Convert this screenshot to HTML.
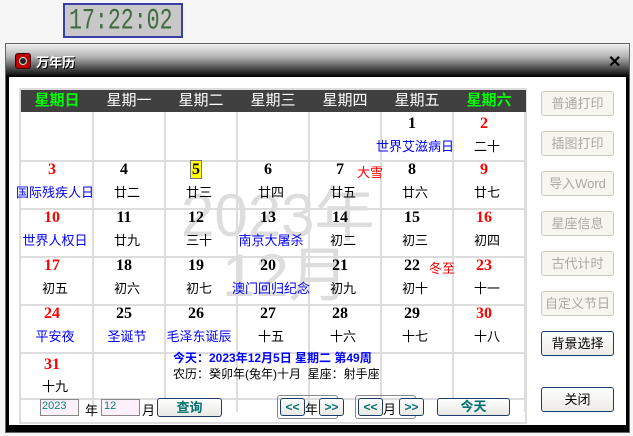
<!DOCTYPE html>
<html><head><meta charset="utf-8"><style>
*{margin:0;padding:0;box-sizing:border-box}
body{width:633px;height:436px;background:#f6f6f6;position:relative;overflow:hidden;font-family:"Liberation Sans","Noto Sans CJK SC",sans-serif;font-size:12px}
.a{position:absolute}
#clock{left:63px;top:3px;width:120px;height:35px;border:2px solid #3a3fa8;background:#c8c8c8;overflow:hidden}
#clock span{position:absolute;left:4px;top:2px;color:#3f6b3f;font:22px/22px "Liberation Mono",monospace;transform:scale(0.98,1.35);transform-origin:0 0;white-space:nowrap}
#win{left:5px;top:43px;width:625px;height:390px;background:#000;border:1px solid #666}
#title{left:6px;top:44px;width:623px;height:33px;background:linear-gradient(#f2f2f2,#b0b0b0 40%,#000)}
#body{left:9px;top:77px;width:617px;height:348px;background:#fff}
.head{left:21px;top:90px;width:505px;height:22px;background:#404040}
.h{position:absolute;top:0;width:72px;text-align:center;color:#fff;font-size:15px;line-height:22px}
.g{color:#00ff00;font-weight:bold}
.vl{position:absolute;width:2px;background:#ddd}
.hl{position:absolute;height:2px;background:#ddd}
.n{position:absolute;width:60px;text-align:center;font:bold 16px "Liberation Serif","Noto Serif CJK SC",serif;color:#000}
.l{position:absolute;width:80px;text-align:center;font-size:13px;color:#000;white-space:nowrap}
.r{color:#f00}.b{color:#00f}
.btn{position:absolute;left:541px;width:73px;height:25px;border:1px solid #ccc9bd;border-radius:3px;background:#f6f5f0;color:#aaa9a0;font-size:13px;text-align:center;line-height:23px}
.btn.on{border-color:#1a3d6e;color:#000;background:linear-gradient(#fff,#ecebe6)}
.sb{position:absolute;border:1px solid #1a3d6e;border-radius:3px;background:linear-gradient(#fff,#e8e8e4);color:#007070;font-weight:bold;text-align:center;font-size:13px}
</style></head><body>
<div id="clock" class="a"><span>17:22:02</span></div>
<div id="win" class="a"></div>
<div id="title" class="a"></div>
<div class="a" style="left:15px;top:53px;width:16px;height:16px;background:#b00;border-radius:3px;border:1px solid #400"><div style="margin:3px;width:8px;height:8px;border-radius:50%;background:#222;border:1px solid #ddd"></div></div>
<div class="a" style="left:36px;top:52px;color:#fff;font-weight:bold;font-size:13px;text-shadow:1px 1px 0 #000">万年历</div>
<div class="a" style="left:608px;top:52px;font-weight:bold;font-size:16px;color:#000">✕</div>
<div id="body" class="a"></div>
<div class="a" style="left:19px;top:88px;width:508px;height:336px;border:2px solid #ddd"></div>
<div class="a" style="left:181px;top:186px;font-size:60px;color:#ddd;line-height:60px">2023年</div>
<div class="a" style="left:222px;top:246px;font-size:60px;color:#ddd;line-height:60px">12月</div>
<div class="head a">
<div class="h g" style="left:0">星期日</div><div class="h" style="left:72px">星期一</div><div class="h" style="left:144px">星期二</div><div class="h" style="left:216px">星期三</div><div class="h" style="left:288px">星期四</div><div class="h" style="left:360px">星期五</div><div class="h g" style="left:432px">星期六</div>
</div>
<div class="vl" style="left:92px;top:112px;height:300px"></div>
<div class="vl" style="left:164px;top:112px;height:288px"></div>
<div class="vl" style="left:236px;top:112px;height:300px"></div>
<div class="vl" style="left:308px;top:112px;height:300px"></div>
<div class="vl" style="left:380px;top:112px;height:288px"></div>
<div class="vl" style="left:452px;top:112px;height:288px"></div>
<div class="vl" style="left:524px;top:112px;height:300px"></div>
<div class="hl" style="left:21px;top:160px;width:505px"></div>
<div class="hl" style="left:21px;top:208px;width:505px"></div>
<div class="hl" style="left:21px;top:256px;width:505px"></div>
<div class="hl" style="left:21px;top:304px;width:505px"></div>
<div class="hl" style="left:21px;top:352px;width:505px"></div>
<div class="hl" style="left:21px;top:398px;width:505px"></div>

<div id="cells"></div>
<script>
var d=[
[[null],[null],[null],[null],[null],["1","世界艾滋病日","b"],["2","二十",""]],
[["3","国际残疾人日","b"],["4","廿二"],["5","廿三"],["6","廿四"],["7","廿五"],["8","廿六"],["9","廿七"]],
[["10","世界人权日","b"],["11","廿九"],["12","三十"],["13","南京大屠杀","b"],["14","初二"],["15","初三"],["16","初四"]],
[["17","初五"],["18","初六"],["19","初七"],["20","澳门回归纪念","b"],["21","初九"],["22","初十"],["23","十一"]],
[["24","平安夜","b"],["25","圣诞节","b"],["26","毛泽东诞辰","b"],["27","十五"],["28","十六"],["29","十七"],["30","十八"]],
[["31","十九"]]];
var h="";
d.forEach(function(row,ri){row.forEach(function(c,ci){if(!c[0])return;var x=21+ci*72,y=112+ri*48;
var red=(ci==0||ci==6)?" r":"";
var num=c[0];if(num=="5")num='<span style="background:#ff0;border:1px solid #777;padding:0 1px">5</span>';
h+='<div class="n'+red+'" style="left:'+(x+1)+'px;top:'+(y+1+(ri==0?2:0)+(ri==5?3:0))+'px">'+num+'</div>';
h+='<div class="l '+(c[2]||"")+'" style="left:'+(x-6)+'px;top:'+(y+22+(ri==0?2:0)+(ri==5?2:0))+'px">'+c[1]+'</div>';});});
document.getElementById("cells").innerHTML=h;
</script>
<div class="a r" style="left:357px;top:162px;font-size:13px">大雪</div>
<div class="a r" style="left:429px;top:258px;font-size:13px">冬至</div>
<div class="a" style="left:173px;top:349px;color:#00f;font-weight:bold;font-size:12px">今天：2023年12月5日 星期二 第49周</div>
<div class="a" style="left:173px;top:365px;font-size:12px">农历：癸卯年(兔年)十月 &nbsp;星座：射手座</div>

<div class="a" style="left:40px;top:399px;width:39px;height:17px;border:1px solid #888;background:#fdf0fb;color:#087;font-size:11px;padding-left:1px">2023</div>
<div class="a" style="left:85px;top:400px;font-size:13px">年</div>
<div class="a" style="left:101px;top:399px;width:39px;height:17px;border:1px solid #888;background:#fdf0fb;color:#087;font-size:11px;padding-left:2px">12</div>
<div class="a" style="left:142px;top:400px;font-size:13px">月</div>
<div class="sb" style="left:157px;top:398px;width:65px;height:19px;line-height:17px">查询</div>
<div class="a" style="left:277px;top:395px;width:61px;height:24px;border:1px solid #888;border-radius:3px"></div>
<div class="sb" style="left:280px;top:398px;width:25px;height:18px;line-height:16px;font-size:12px">&lt;&lt;</div>
<div class="a" style="left:305px;top:399px;font-size:13px">年</div>
<div class="sb" style="left:319px;top:398px;width:25px;height:18px;line-height:16px;font-size:12px">&gt;&gt;</div>
<div class="a" style="left:355px;top:395px;width:61px;height:24px;border:1px solid #888;border-radius:3px"></div>
<div class="sb" style="left:358px;top:398px;width:25px;height:18px;line-height:16px;font-size:12px">&lt;&lt;</div>
<div class="a" style="left:383px;top:399px;font-size:13px">月</div>
<div class="sb" style="left:399px;top:398px;width:25px;height:18px;line-height:16px;font-size:12px">&gt;&gt;</div>
<div class="sb" style="left:437px;top:398px;width:73px;height:18px;line-height:16px">今天</div>

<div class="btn" style="top:91px">普通打印</div>
<div class="btn" style="top:131px">插图打印</div>
<div class="btn" style="top:171px">导入Word</div>
<div class="btn" style="top:211px">星座信息</div>
<div class="btn" style="top:251px">古代计时</div>
<div class="btn" style="top:291px">自定义节日</div>
<div class="btn on" style="top:331px">背景选择</div>
<div class="btn on" style="top:387px">关闭</div>
</body></html>
